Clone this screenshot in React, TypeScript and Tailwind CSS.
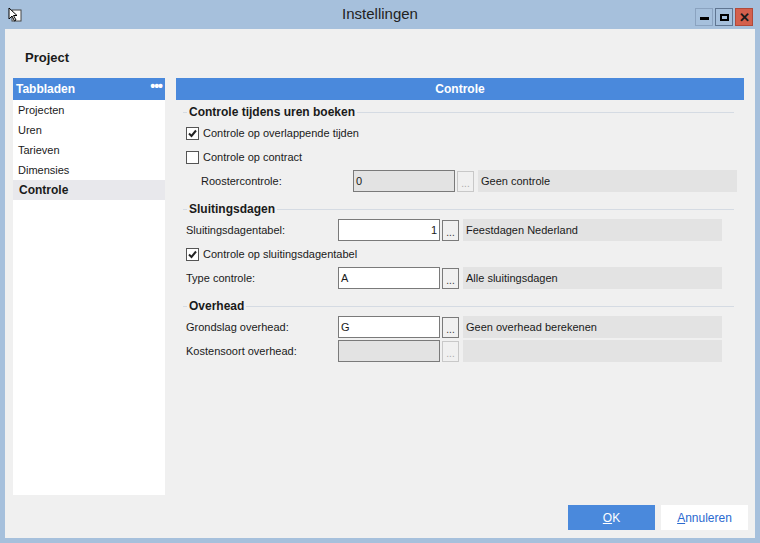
import React from "react";

const F = { fontFamily: '"Liberation Sans", Arial, sans-serif' };

function Check({ checked, label }: { checked: boolean; label: string }) {
  return (
    <div className="flex items-center h-[24px] pl-[3px] gap-[4px]">
      <div className="w-[13px] h-[13px] border border-[#555] bg-white flex items-center justify-center">
        {checked && (
          <svg width="11" height="11" viewBox="0 0 11 11">
            <path d="M2 5.5 L4.5 8 L9 2.5" stroke="#222" strokeWidth="2" fill="none" />
          </svg>
        )}
      </div>
      <span>{label}</span>
    </div>
  );
}

function Row({ label, value, desc, enabled, right }: { label: string; value: string; desc: string; enabled: boolean; right?: boolean }) {
  return (
    <div className="flex items-center h-[24px]">
      <div className="w-[155px] pl-[3px]">{label}</div>
      <div className={`w-[102px] h-[22px] border border-[#7a7a7a] flex items-center px-[2px] ${enabled ? "bg-white" : "bg-[#e3e3e3]"} ${right ? "justify-end" : ""}`}>{value}</div>
      <div className={`ml-[2px] w-[17px] h-[21px] border flex items-end justify-center text-[10px] leading-[14px] ${enabled ? "border-[#7a7a7a] bg-[#f0f0f0] text-[#333]" : "border-[#c8c8c8] bg-[#f0f0f0] text-[#aaa]"}`}>...</div>
      <div className="ml-[4px] w-[259px] h-[22px] bg-[#e3e3e3] flex items-start pt-[3px] px-[3px]">{desc}</div>
    </div>
  );
}

function Section({ title }: { title: string }) {
  return (
    <div className="flex items-center h-[18px] mt-[1px]">
      <div className="w-[4px] border-t border-[#d5dbe3]" />
      <span className="font-bold text-[12px] px-[2px]">{title}</span>
      <div className="flex-1 border-t border-[#d5dbe3] mr-[10px]" />
    </div>
  );
}

export default function App() {
  return (
    <div style={F} className="w-[760px] h-[543px] bg-[#a6c0dc] flex flex-col text-[12px] text-[#1a1a1a]">
      <div className="h-[29px] flex items-center relative">
        <div className="absolute left-[8px] top-[7px] w-[13px] h-[15px]">
          <svg width="14" height="16" viewBox="0 0 14 16">
            <rect x="4" y="3" width="9" height="11" fill="#fff" stroke="#444" />
            <path d="M1 1 L1 12 L4 9 L6.5 14 L8 13 L5.5 8.5 L9 8.5 Z" fill="#fff" stroke="#000" strokeWidth="1" />
          </svg>
        </div>
        <div className="flex-1 text-center text-[15px] text-[#222]">Instellingen</div>
        <div className="absolute right-[7px] top-[8px] flex gap-[2px]">
          <div className="w-[18px] h-[18px] border border-[#8ba3c0] flex items-center justify-center"><div className="w-[9px] h-[3px] bg-black mt-[3px]" /></div>
          <div className="w-[18px] h-[18px] border border-[#5f7591] flex items-center justify-center"><div className="w-[9px] h-[7px] border-2 border-black" /></div>
          <div className="w-[18px] h-[18px] border border-[#b04a3a] bg-[#d4604d] flex items-center justify-center font-bold text-[13px] leading-none">✕</div>
        </div>
      </div>
      <div className="mx-[5px] mb-[5px] flex-1 bg-[#f0f0f0] flex flex-col">
        <div className="h-[49px] pl-[20px] pt-[19px] font-bold text-[13px]">Project</div>
        <div className="flex flex-1 px-[8px] gap-[11px]">
          <div className="w-[152px] h-[417px] bg-white flex flex-col">
            <div className="h-[22px] bg-[#4a89dc] text-white font-bold text-[12px] flex items-center justify-between px-[3px]">
              <span>Tabbladen</span><span className="text-[14px] leading-none tracking-[-1px] mb-[6px]">•••</span>
            </div>
            {["Projecten", "Uren", "Tarieven", "Dimensies"].map((t) => (
              <div key={t} className="h-[20px] flex items-center px-[5px] text-[11px]">{t}</div>
            ))}
            <div className="h-[20px] flex items-center px-[6px] bg-[#e8e8ec] font-bold">Controle</div>
          </div>
          <div className="w-[568px] flex flex-col text-[11px]">
            <div className="h-[22px] bg-[#4a89dc] text-white font-bold text-[12px] flex items-center justify-center">Controle</div>
            <div className="pl-[7px] pt-[2px] flex flex-col">
              <Section title="Controle tijdens uren boeken" />
              <Check checked label="Controle op overlappende tijden" />
              <Check checked={false} label="Controle op contract" />
              <div className="pl-[15px]"><Row label="Roostercontrole:" value="0" desc="Geen controle" enabled={false} /></div>
              <div className="h-[6px]" />
              <div className="-ml-[15px] w-[0px]" />
              <Section title="Sluitingsdagen" />
              <Row label="Sluitingsdagentabel:" value="1" desc="Feestdagen Nederland" enabled right />
              <Check checked label="Controle op sluitingsdagentabel" />
              <Row label="Type controle:" value="A" desc="Alle sluitingsdagen" enabled />
              <div className="h-[6px]" />
              <Section title="Overhead" />
              <Row label="Grondslag overhead:" value="G" desc="Geen overhead berekenen" enabled />
              <Row label="Kostensoort overhead:" value="" desc="" enabled={false} />
            </div>
          </div>
        </div>
        <div className="flex justify-end gap-[6px] pr-[7px] pb-[8px]">
          <div className="w-[87px] h-[25px] bg-[#4a89dc] text-white flex items-center justify-center"><span><u>O</u>K</span></div>
          <div className="w-[87px] h-[25px] bg-white text-[#2a6ad0] flex items-center justify-center"><span><u>A</u>nnuleren</span></div>
        </div>
      </div>
    </div>
  );
}
